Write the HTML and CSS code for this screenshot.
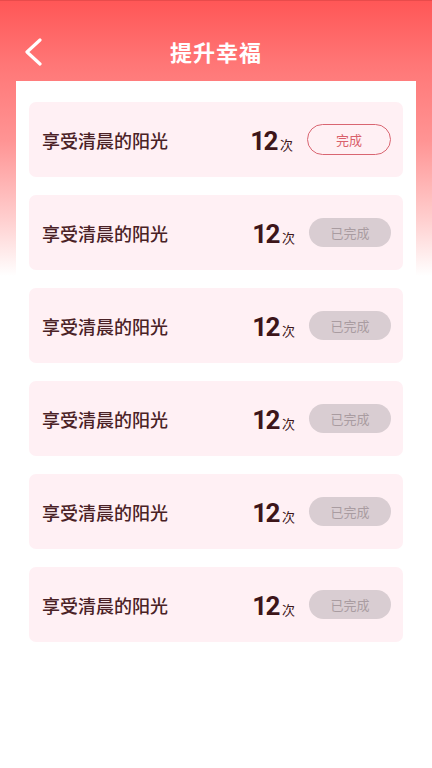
FILE: index.html
```html
<!DOCTYPE html>
<html>
<head>
    <title>提升幸福</title>
    <link rel="stylesheet" href="styles.css">
</head>
<body>
<div class="page">
    <div class="nav">
        <svg class="back" width="20" height="28" viewBox="0 0 20 28">
            <path d="M17 2 L4 14 L17 26" fill="none" stroke="#fff" stroke-width="3.2" stroke-linecap="round" stroke-linejoin="round"/>
        </svg>
        <h1>提升幸福</h1>
    </div>

    <div class="panel">
        <div class="task">
            <span class="name">享受清晨的阳光</span>
            <span class="count">12<small>次</small></span>
            <button class="btn">完成</button>
        </div>
        <div class="task">
            <span class="name">享受清晨的阳光</span>
            <span class="count">12<small>次</small></span>
            <button class="btn done">已完成</button>
        </div>
        <div class="task">
            <span class="name">享受清晨的阳光</span>
            <span class="count">12<small>次</small></span>
            <button class="btn done">已完成</button>
        </div>
        <div class="task">
            <span class="name">享受清晨的阳光</span>
            <span class="count">12<small>次</small></span>
            <button class="btn done">已完成</button>
        </div>
        <div class="task">
            <span class="name">享受清晨的阳光</span>
            <span class="count">12<small>次</small></span>
            <button class="btn done">已完成</button>
        </div>
        <div class="task">
            <span class="name">享受清晨的阳光</span>
            <span class="count">12<small>次</small></span>
            <button class="btn done">已完成</button>
        </div>
    </div>
</div>
</body>
</html>
```

FILE: styles.css
```css
body {
    margin: 0;
    padding: 0;
    font-family: "Noto Sans CJK SC", "Noto Sans", sans-serif;
    background-color: #fff;
}

.page {
    min-height: 768px;
    background: linear-gradient(180deg, #ff5757 0px, #ff7575 60px, #ff9494 140px, #ffd0d0 220px, #fff 275px) no-repeat;
    background-size: 100% 280px;
    border-top: 1px solid #e84b4b;
    box-sizing: border-box;
}

.nav {
    position: relative;
    height: 80px;
    display: flex;
    align-items: center;
    justify-content: center;
    padding-top: 20px;
    box-sizing: border-box;
}

.nav h1 {
    margin: 0;
    font-size: 22px;
    font-weight: bold;
    color: #fff;
    letter-spacing: 1px;
}

.back {
    position: absolute;
    left: 23px;
    top: 37px;
}

.panel {
    margin: 0 16px;
    background-color: #fff;
    padding: 21px 13px 40px;
}

.task {
    display: flex;
    align-items: center;
    height: 75px;
    margin-bottom: 18px;
    padding: 0 12px 0 13px;
    background-color: #fff0f4;
    border-radius: 7px;
}

.name {
    flex: 1;
    font-size: 18px;
    font-weight: 500;
    color: #4a2226;
}

.count {
    font-family: "Roboto", sans-serif;
    font-size: 26px;
    font-weight: bold;
    letter-spacing: -1.5px;
    color: #3d1519;
    margin-right: 14px;
    margin-top: 2px;
}

.count small {
    font-family: "Noto Sans CJK SC", sans-serif;
    font-size: 13px;
    font-weight: normal;
    letter-spacing: 0;
    margin-left: 3px;
}

.btn {
    width: 84px;
    height: 31px;
    border: 1.5px solid #d96571;
    border-radius: 16px;
    background-color: transparent;
    color: #d9606b;
    font-family: "Noto Sans CJK SC", sans-serif;
    font-size: 13px;
    padding: 0;
    cursor: pointer;
}

.btn.done {
    width: 82px;
    height: 29px;
    border: none;
    background-color: #d9cdd2;
    color: #a99ca1;
}
```
